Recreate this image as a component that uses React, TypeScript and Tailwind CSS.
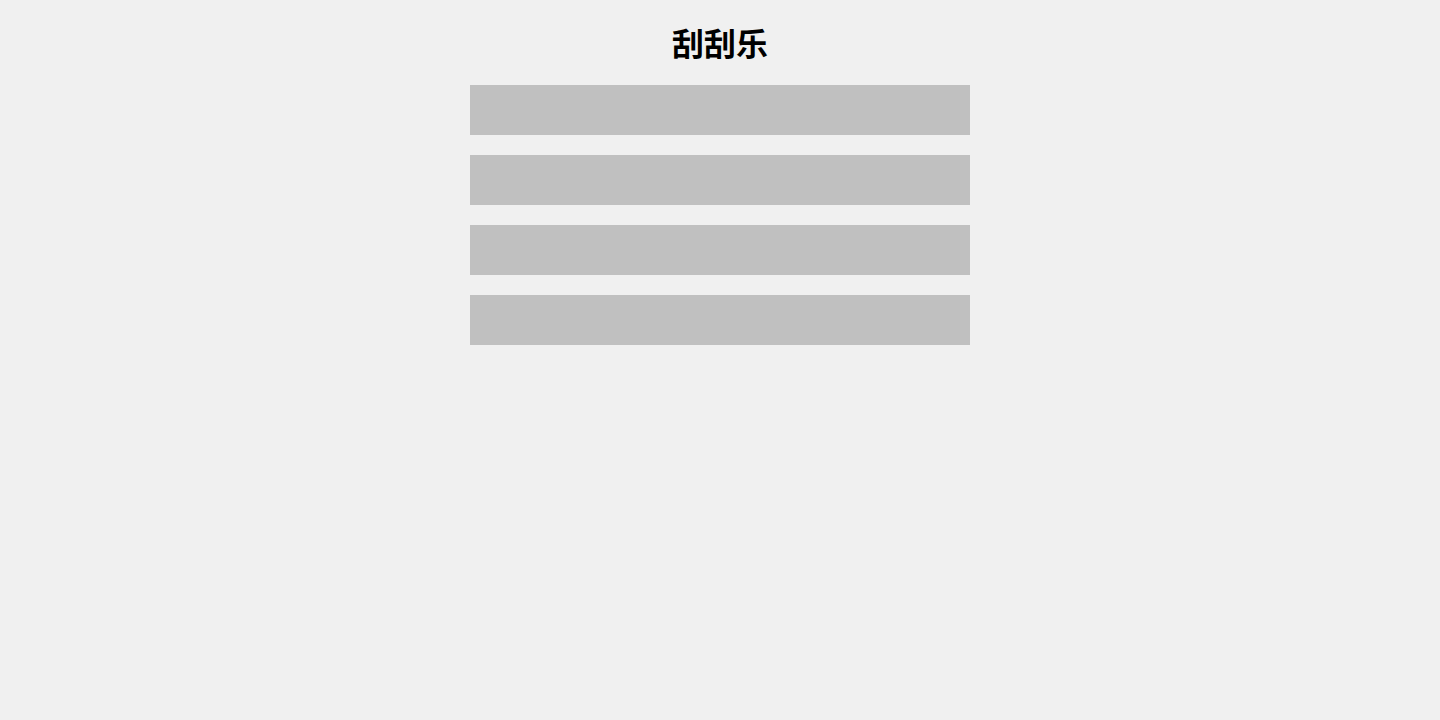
const cards = [1, 2, 3, 4]

function App() {
  return (
    <div className="w-full min-h-screen bg-[#f0f0f0] flex flex-col items-center pt-[26px] font-['Noto_Sans_CJK_SC',sans-serif]">
      <h1 className="text-[32px] leading-[32px] font-bold text-black">刮刮乐</h1>
      <div className="mt-[27px] flex flex-col gap-[20px]">
        {cards.map(id => (
          <div key={id} className="w-[500px] h-[50px] bg-[#c0c0c0]"></div>
        ))}
      </div>
    </div>
  )
}

export default App
